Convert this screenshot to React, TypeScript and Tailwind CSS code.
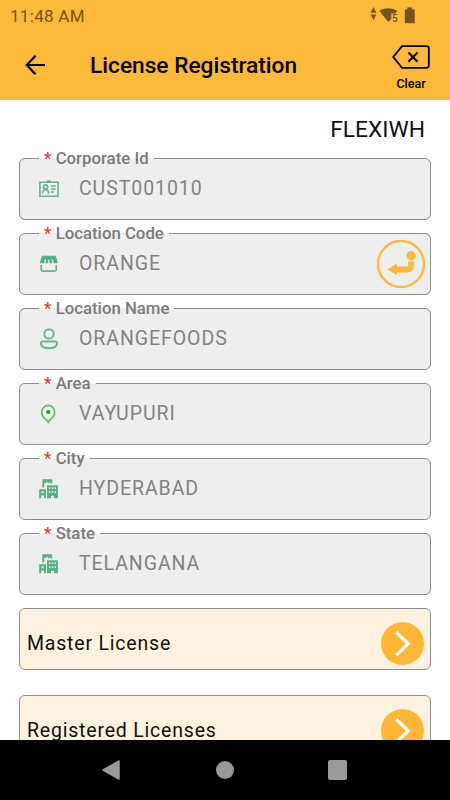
import React from "react";

const IdCardIcon = () => (
  <svg width="22" height="20" viewBox="0 0 22 20" fill="none" stroke="#62b48a" strokeWidth="1.6">
    <path d="M1.9 3.2H20.1V17.2H1.9Z" />
    <path d="M9 2.2h4" strokeWidth="1.8" />
    <circle cx="7.6" cy="8" r="2.1" />
    <path d="M4.5 14.6c0-5.2 6.2-5.2 6.2 0" />
    <path d="M13 7h4.7M13 10h4.7M13 13h3" />
  </svg>
);

const StoreIcon = () => (
  <svg width="22" height="20" viewBox="0 0 22 20" fill="none" stroke="#5fb487">
    <path d="M4.4 2.3H17.4L19.2 8.6H2.4Z" fill="#4fae7c" strokeWidth="1.2" strokeLinejoin="round" />
    <path d="M6.6 10L7.4 5.4M10.9 10V5.4M15.1 10L14.3 5.4" stroke="#e8efe9" strokeWidth="1.3" />
    <path d="M3.2 11v4.5q0 1.6 1.6 1.6h11.9q1.6 0 1.6-1.6V11" strokeWidth="1.7" />
  </svg>
);

const PersonIcon = () => (
  <svg width="22" height="22" viewBox="0 0 22 22" fill="none" stroke="#68b78e" strokeWidth="2">
    <circle cx="11" cy="5.9" r="4.7" />
    <path d="M4.8 13.5H17.2Q19.5 13.7 19 16C18 21.5 4 21.5 3 16Q2.5 13.7 4.8 13.5Z" />
  </svg>
);

const PinIcon = () => (
  <svg width="22" height="22" viewBox="0 0 22 22">
    <path
      d="M10.2 19.2L8.2 16.4C5.4 14.8 3.8 12.2 3.8 9A6.4 6.6 0 0 1 16.6 9C16.6 12.2 15 14.8 12.2 16.4Z"
      fill="#f4faf4"
      stroke="#65b968"
      strokeWidth="1.7"
    />
    <circle cx="10.2" cy="9" r="2.1" fill="#149a1d" />
  </svg>
);

const BuildingsIcon = () => (
  <svg width="22" height="22" viewBox="0 0 22 22" fill="#55b184">
    <path d="M4.3 1.3H14.2V5.4H12.3V3.7L10.6 5.6L9 3.7L7.5 5.6L6.2 4.2V9.4H4.3Z" />
    <path d="M1.2 11.2H8V20.3H6V17.5H3.2V20.3H1.2Z" />
    <path d="M9 7.2H19.9V20.3H15.9V17.7H13V20.3H9Z" />
    <path
      d="M3.4 13.2h2.3v2H3.4zM10.9 9.3h1.5v1.8h-1.5zM13.7 9.3h1.5v1.8h-1.5zM16.5 9.3h1.5v1.8h-1.5zM10.9 13.2h1.5V15h-1.5zM13.7 13.2h1.5V15h-1.5zM16.5 13.2h1.5V15h-1.5z"
      fill="#dcebe2"
    />
  </svg>
);

const LookupButton = () => (
  <button className="ml-auto shrink-0" aria-label="Look up location">
    <svg width="50" height="50" viewBox="0 0 50 50">
      <circle cx="25" cy="25" r="23" fill="#eeeeee" stroke="#fdb93a" strokeWidth="2.4" />
      <circle cx="35.2" cy="16.8" r="4.7" fill="#fdb93a" />
      <path d="M35 22.3V26Q35 30.6 30.5 30.6H18" fill="none" stroke="#fdb93a" strokeWidth="6" />
      <path d="M11.4 30.5L21 24.6V36.2Z" fill="#fdb93a" />
    </svg>
  </button>
);

type FieldProps = {
  label: string;
  value: string;
  icon: React.ReactNode;
  action?: React.ReactNode;
};

const Field = ({ label, value, icon, action }: FieldProps) => {
  return (
    <fieldset className="h-[71px] min-w-0 rounded-[6px] border border-[#8c8c8c] bg-[#eeeeee] pl-[18px] pr-[4px]">
      <legend className="ml-[1px] h-[18px] whitespace-nowrap px-[5px] text-[16.8px] font-medium leading-[18px] text-[#7b7b7b]">
        <span className="text-[#e5392f]">*</span> {label}
      </legend>
      <div className="flex h-[43px] items-center">
        <span className="flex w-[22px] shrink-0 justify-center">{icon}</span>
        <span className="ml-[19px] text-[19.5px] leading-[29px] tracking-[0.93px] text-[#838383]">{value}</span>
        {action}
      </div>
    </fieldset>
  );
};

const LinkCard = ({ title }: { title: string }) => {
  return (
    <button className="flex h-[62px] w-full shrink-0 items-center justify-between rounded-[6px] border border-[#8c8c8c] bg-[#fcf2df] pl-[7px] pr-[6px] pt-[9px]">
      <span className="text-[19.5px] tracking-[0.8px] text-[#111111]">{title}</span>
      <svg width="43" height="43" viewBox="0 0 43 43">
        <circle cx="21.5" cy="21.5" r="21.5" fill="#fdb735" />
        <path d="M15.3 10.2L27.2 21.8L15.3 33.4" fill="none" stroke="#fff" strokeWidth="3.3" />
      </svg>
    </button>
  );
};

const StatusBar = () => {
  return (
    <div className="flex h-8 items-center justify-between pl-[10px] pr-[34px] text-[#75551a]">
      <span className="text-[17px] leading-8 tracking-[0.3px]">11:48 AM</span>
      <svg width="46" height="18" viewBox="0 0 46 18" fill="currentColor">
        <path d="M3.5 0L6.4 5.7H.6ZM3.5 13.2L6.4 7.5H.6Z" />
        <path d="M9.3 4C14 .4 22.6 .4 27.2 4L25.2 6.6H21.3V12L18.3 15Z" />
        <text x="22" y="14.6" fontSize="10" fontWeight="500">5</text>
        <path d="M37.2 .5h5v2H44.7V16.3H34.8V2.5h2.4Z" />
      </svg>
    </div>
  );
};

const Header = () => {
  return (
    <header className="h-[100px] shrink-0 bg-[#fdb93a]">
      <StatusBar />
      <div className="flex h-[68px] items-center pl-[25px] pr-[20px]">
        <svg width="21" height="20" viewBox="0 0 21 20" fill="none" stroke="#000" strokeWidth="2.2" className="mb-[2px]">
          <path d="M10.5 .8L1.8 10L10.5 19.2M2 10H20" />
        </svg>
        <h1 className="ml-[44px] text-[22.7px] font-medium leading-8 text-black">License Registration</h1>
        <button className="ml-auto flex flex-col items-center pt-[5px] text-black">
          <svg width="38" height="24" viewBox="0 0 38 24" fill="none" stroke="#000">
            <path d="M10 1.2H34.5Q36.8 1.2 36.8 3.4V20.6Q36.8 22.8 34.5 22.8H10L1.3 12Z" strokeWidth="1.8" />
            <path d="M16.4 7.5L25.6 16.7M25.6 7.5L16.4 16.7" strokeWidth="2.1" />
          </svg>
          <span className="mt-[7px] text-[12.5px] font-medium leading-4">Clear</span>
        </button>
      </div>
    </header>
  );
};

const NavBar = () => {
  return (
    <nav className="flex h-[60px] shrink-0 items-center justify-between bg-black pl-[102px] pr-[103px]">
      <svg width="19" height="20" viewBox="0 0 19 20">
        <path d="M1 10L17 1V19Z" fill="#999" stroke="#999" strokeWidth="1.5" strokeLinejoin="round" />
      </svg>
      <span className="h-[18px] w-[18px] rounded-full bg-[#999999]" />
      <span className="h-[20px] w-[19px] rounded-[2px] bg-[#999999]" />
    </nav>
  );
};

const App = () => {
  return (
    <div className="flex h-[800px] w-[450px] flex-col overflow-hidden bg-white font-['Roboto',sans-serif]">
      <Header />
      <main className="min-h-0 flex-1 overflow-hidden pl-[19px] pr-[19px]">
        <p className="h-[49px] pr-[6px] pt-[14px] text-right text-[22.8px] leading-[31px] text-[#111111]">FLEXIWH</p>
        <div className="flex flex-col gap-1">
          <Field label="Corporate Id" value="CUST001010" icon={<IdCardIcon />} />
          <Field label="Location Code" value="ORANGE" icon={<StoreIcon />} action={<LookupButton />} />
          <Field label="Location Name" value="ORANGEFOODS" icon={<PersonIcon />} />
          <Field label="Area" value="VAYUPURI" icon={<PinIcon />} />
          <Field label="City" value="HYDERABAD" icon={<BuildingsIcon />} />
          <Field label="State" value="TELANGANA" icon={<BuildingsIcon />} />
        </div>
        <div className="mt-[13px] flex flex-col gap-[25px]">
          <LinkCard title="Master License" />
          <LinkCard title="Registered Licenses" />
        </div>
      </main>
      <NavBar />
    </div>
  );
};

export default App;
